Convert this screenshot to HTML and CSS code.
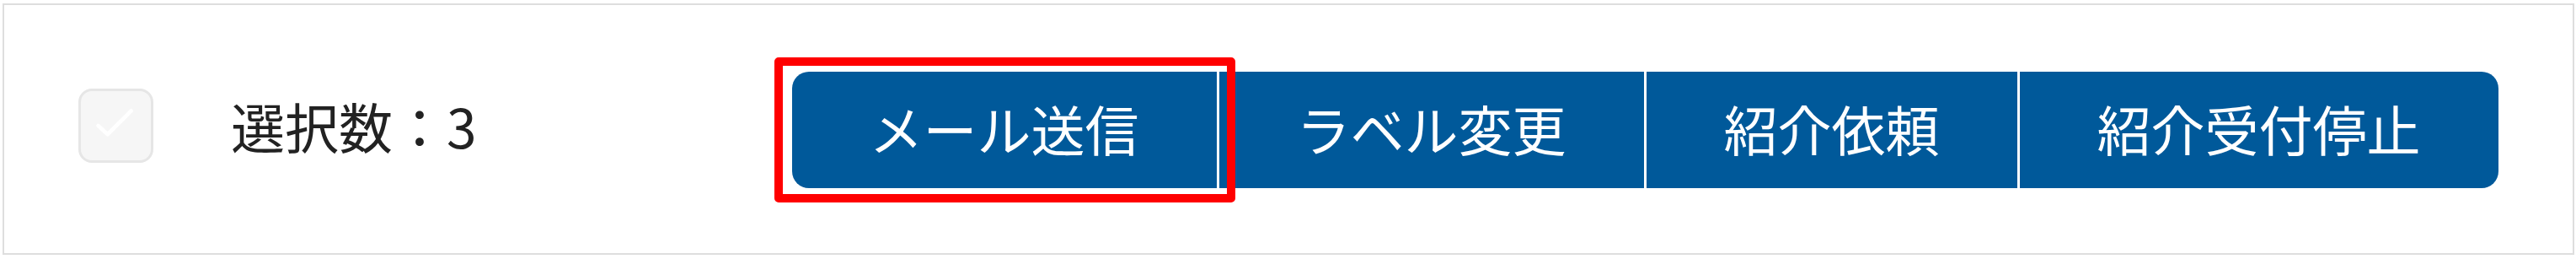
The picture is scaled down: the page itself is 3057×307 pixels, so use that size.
FILE: index.html
```html
<!DOCTYPE html>
<html lang="ja">
<head>
<meta charset="utf-8">
<link rel="stylesheet" href="styles.css">
</head>
<body>
<div class="panel">
  <div class="check" role="checkbox" aria-checked="true" aria-disabled="true">
    <svg class="check-mark" viewBox="0 0 89 88" width="83" height="82">
      <polyline points="22,44 34,55 64,25" fill="none" stroke="#ffffff" stroke-width="5" stroke-linecap="round" stroke-linejoin="round"/>
    </svg>
  </div>
  <div class="count">選択数：3</div>
  <div class="actions">
    <button class="btn btn-first">メール送信<span class="highlight"></span></button>
    <button class="btn">ラベル変更</button>
    <button class="btn">紹介依頼</button>
    <button class="btn btn-last">紹介受付停止</button>
  </div>
</div>
</body>
</html>
```

FILE: styles.css
```css
html, body {
  margin: 0;
  padding: 0;
  background: #ffffff;
}

body {
  font-family: "Noto Sans CJK JP", "Noto Sans", sans-serif;
  color: #222222;
}

.panel {
  box-sizing: border-box;
  margin: 4px 2px 0 3px;
  width: 3052px;
  height: 298px;
  border: 2px solid #dedede;
  display: flex;
  align-items: center;
  padding-left: 88px;
}

.check {
  box-sizing: border-box;
  width: 89px;
  height: 88px;
  border: 3px solid #e6e6e6;
  border-radius: 16px;
  background: #f6f6f6;
  margin-bottom: 8px;
  flex: none;
}

.check-mark {
  display: block;
}

.count {
  margin-left: 92px;
  font-size: 64px;
  line-height: 1;
  margin-bottom: 10px;
  color: #222222;
  flex: none;
}

.actions {
  display: flex;
  gap: 3px;
  margin-left: 374px;
  margin-top: 2px;
}

.btn {
  position: relative;
  height: 138px;
  padding: 0 92px 6px;
  border: none;
  background: #00599a;
  color: #ffffff;
  font-family: "Noto Sans CJK JP", "Noto Sans", sans-serif;
  font-size: 64px;
  line-height: 1;
  white-space: nowrap;
  cursor: pointer;
}

.btn-first {
  border-radius: 20px 0 0 20px;
}

.btn-last {
  border-radius: 0 20px 20px 0;
}

.highlight {
  position: absolute;
  left: -21px;
  top: -17px;
  right: -22px;
  bottom: -17px;
  border: 10px solid #ff0000;
  border-radius: 5px;
  z-index: 2;
  pointer-events: none;
}
```
